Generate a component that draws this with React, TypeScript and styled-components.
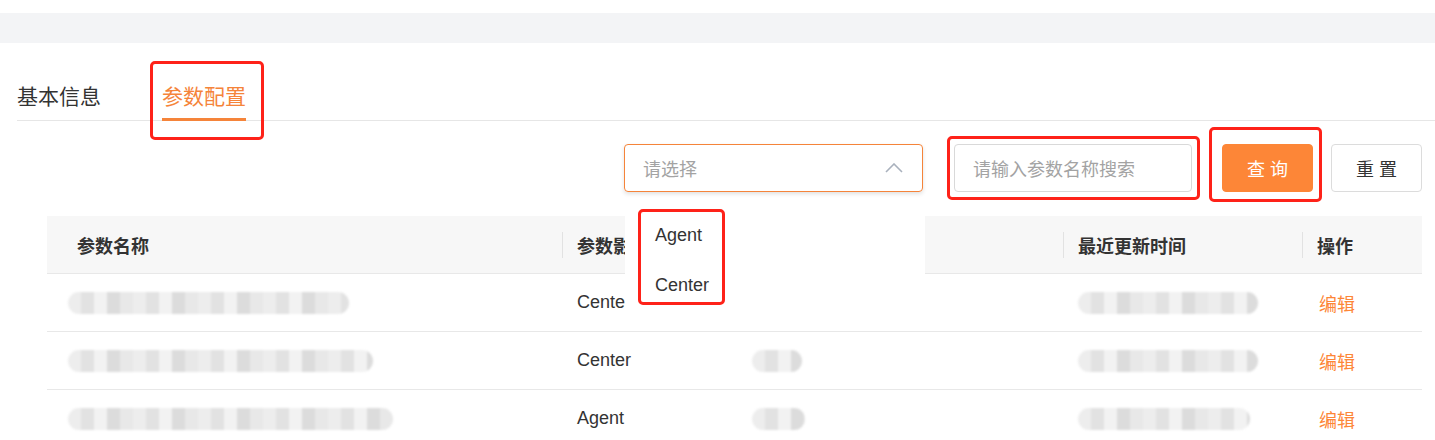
import React from 'react';
import styled, { createGlobalStyle } from 'styled-components';

const GlobalStyle = createGlobalStyle`
    body {
        margin: 0;
        background: #fff;
        font-family: "Liberation Sans", "Noto Sans CJK SC", sans-serif;
        color: #333;
    }
`;

const ORANGE = '#fd8637';

const Page = styled.div`
    width: 1435px;
    height: 440px;
    overflow: hidden;
    padding-top: 13px;
    box-sizing: border-box;
`;

const TopBand = styled.div`
    height: 30px;
    background: #f3f4f6;
`;

const Content = styled.div`
    padding: 0 13px 0 17px;
`;

const TabBar = styled.div`
    display: flex;
    align-items: flex-end;
    gap: 61px;
    height: 78px;
    box-sizing: border-box;
    margin-right: -13px;
    border-bottom: 1px solid #e6e6e6;
`;

const Tab = styled.div<{ $active?: boolean }>`
    position: relative;
    font-size: 21px;
    line-height: 30px;
    padding-bottom: 6px;
    margin-bottom: -1px;
    color: ${({ $active }) => ($active ? '#f5843a' : '#333')};
    border-bottom: 3px solid ${({ $active }) => ($active ? '#f5843a' : 'transparent')};
`;

const Highlight = styled.span<{ $t: number; $r: number; $b: number; $l: number }>`
    position: absolute;
    top: ${({ $t }) => $t}px;
    right: ${({ $r }) => $r}px;
    bottom: ${({ $b }) => $b}px;
    left: ${({ $l }) => $l}px;
    border: 3px solid #fe2219;
    border-radius: 5px;
    pointer-events: none;
    z-index: 5;
`;

const Toolbar = styled.div`
    display: flex;
    justify-content: flex-end;
    align-items: center;
    margin-top: 23px;
    height: 48px;
`;

const SelectWrap = styled.div`
    position: relative;
    margin-right: 31px;
`;

const SelectBox = styled.div`
    width: 299px;
    height: 48px;
    box-sizing: border-box;
    border: 1px solid #f5843a;
    border-radius: 4px;
    box-shadow: 0 2px 4px rgba(0, 0, 0, 0.12);
    display: flex;
    align-items: center;
    justify-content: space-between;
    padding: 0 19px 0 18px;
    font-size: 18px;
    color: #a3a3a3;
`;

const Dropdown = styled.div`
    position: absolute;
    top: 60px;
    left: 1px;
    width: 300px;
    padding: 6px 0;
    background: #fff;
    z-index: 4;
`;

const Option = styled.div`
    height: 50px;
    line-height: 50px;
    padding-left: 30px;
    font-size: 18px;
    color: #333;
`;

const OptionGroup = styled.div`
    position: relative;
`;

const Field = styled.div<{ $gap?: number }>`
    position: relative;
    margin-right: ${({ $gap }) => $gap ?? 30}px;
`;

const SearchInput = styled.div`
    width: 238px;
    height: 48px;
    box-sizing: border-box;
    border: 1px solid #d9d9d9;
    border-radius: 4px;
    display: flex;
    align-items: center;
    padding-left: 18px;
    font-size: 18px;
    color: #a3a3a3;
`;

const Button = styled.div<{ $primary?: boolean }>`
    position: relative;
    width: 91px;
    height: 48px;
    box-sizing: border-box;
    border-radius: 4px;
    display: flex;
    align-items: center;
    justify-content: center;
    font-size: 18px;
    letter-spacing: 5px;
    text-indent: 5px;
    background: ${({ $primary }) => ($primary ? ORANGE : '#fff')};
    color: ${({ $primary }) => ($primary ? '#fff' : '#333')};
    border: 1px solid ${({ $primary }) => ($primary ? ORANGE : '#dcdcdc')};
`;

const Table = styled.div`
    margin: 24px 0 0 30px;
    display: grid;
    grid-template-columns: 515px 175px 326px 239px 120px;
`;

const HeadCell = styled.div<{ $first?: boolean }>`
    position: relative;
    height: 57px;
    background: #f7f7f7;
    border-bottom: 1px solid #e8e8e8;
    display: flex;
    align-items: center;
    padding-left: ${({ $first }) => ($first ? 30 : 15)}px;
    font-size: 18px;
    font-weight: 700;
    color: #333;
    white-space: nowrap;
    overflow: hidden;

    &::before {
        content: '';
        display: ${({ $first }) => ($first ? 'none' : 'block')};
        position: absolute;
        left: 0;
        top: 16px;
        bottom: 15px;
        width: 1px;
        background: #e2e2e2;
    }
`;

const Cell = styled.div<{ $first?: boolean }>`
    height: 57px;
    border-bottom: 1px solid #e8e8e8;
    display: flex;
    align-items: center;
    padding-left: ${({ $first }) => ($first ? 21 : 15)}px;
    font-size: 18px;
    color: #333;
`;

const EditLink = styled.span`
    color: ${ORANGE};
    padding-left: 2px;
`;

const Blur = styled.span<{ $w: number }>`
    display: inline-block;
    width: ${({ $w }) => $w}px;
    height: 22px;
    border-radius: 11px;
    background: repeating-linear-gradient(
        90deg,
        #ededed 0 13px,
        #e2e2e2 13px 26px,
        #f2f2f2 26px 39px,
        #dcdcdc 39px 52px,
        #e8e8e8 52px 65px
    );
    filter: blur(1px);
`;

const Chevron = () => (
    <svg width="18" height="10" viewBox="0 0 18 10" fill="none">
        <path d="M1 9 L9 1 L17 9" stroke="#a9b1bd" strokeWidth="1.6" />
    </svg>
);

const rows = [
    { name: 281, scope: 'Center', value: 0, time: 180 },
    { name: 305, scope: 'Center', value: 50, time: 180 },
    { name: 325, scope: 'Agent', value: 53, time: 172 },
];

const App: React.FC = () => {
    return (
        <Page>
            <GlobalStyle />
            <TopBand />
            <Content>
                <TabBar>
                    <Tab>基本信息</Tab>
                    <Tab $active>
                        参数配置
                        <Highlight $t={-21} $r={-18} $b={-22} $l={-12} />
                    </Tab>
                </TabBar>

                <Toolbar>
                    <SelectWrap>
                        <SelectBox>
                            请选择
                            <Chevron />
                        </SelectBox>
                        <Dropdown>
                            <OptionGroup>
                                <Option>Agent</Option>
                                <Option>Center</Option>
                                <Highlight $t={-1} $r={200} $b={5} $l={13} />
                            </OptionGroup>
                        </Dropdown>
                    </SelectWrap>
                    <Field>
                        <SearchInput>请输入参数名称搜索</SearchInput>
                        <Highlight $t={-8} $r={-8} $b={-8} $l={-7} />
                    </Field>
                    <Field $gap={18}>
                        <Button $primary>查询</Button>
                        <Highlight $t={-17} $r={-9} $b={-10} $l={-13} />
                    </Field>
                    <Button>重置</Button>
                </Toolbar>

                <Table>
                    <HeadCell $first>参数名称</HeadCell>
                    <HeadCell>参数影响范围</HeadCell>
                    <HeadCell>参数值</HeadCell>
                    <HeadCell>最近更新时间</HeadCell>
                    <HeadCell>操作</HeadCell>
                    {rows.map((r, i) => (
                        <React.Fragment key={i}>
                            <Cell $first><Blur $w={r.name} /></Cell>
                            <Cell>{r.scope}</Cell>
                            <Cell>{r.value > 0 && <Blur $w={r.value} />}</Cell>
                            <Cell><Blur $w={r.time} /></Cell>
                            <Cell><EditLink>编辑</EditLink></Cell>
                        </React.Fragment>
                    ))}
                </Table>
            </Content>
        </Page>
    );
};

export default App;
